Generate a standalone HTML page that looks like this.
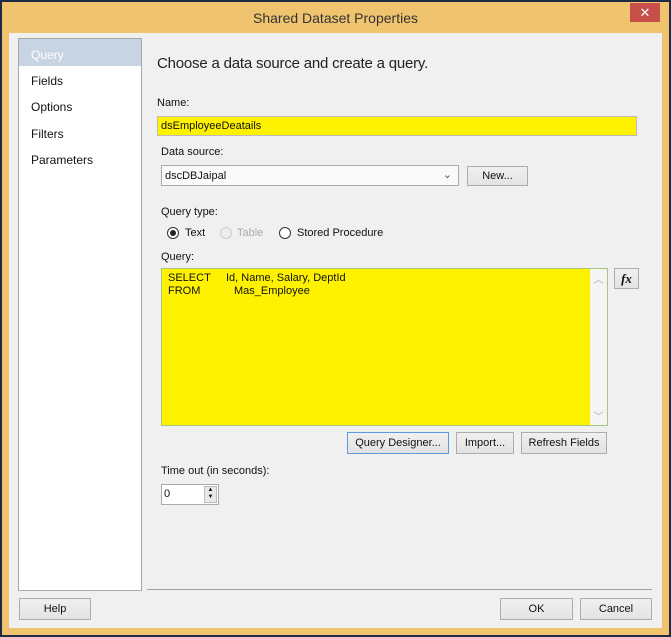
<!DOCTYPE html>
<html><head><style>
*{box-sizing:border-box;margin:0;padding:0}
body{width:671px;height:637px;background:#1f2b44;position:relative;overflow:hidden;font-family:"Liberation Sans",sans-serif;font-size:11px;color:#111}
.frame{position:absolute;left:2px;top:2px;width:667px;height:633px;background:#f0c46e}
.title{position:absolute;left:0;width:671px;text-align:center;top:10px;font-size:14px;color:#333}
.x{position:absolute;left:630px;top:3px;width:30px;height:19px;background:#c7504b;color:#fff;text-align:center;font-size:13px;line-height:19px}
.client{position:absolute;left:9px;top:33px;width:653px;height:595px;background:#f0f0f0}
.a{position:absolute}
.left{left:18px;top:38px;width:124px;height:553px;background:#fff;border:1px solid #a9a9a9}
.item{position:absolute;left:12px;font-size:12px}
.btn{position:absolute;background:linear-gradient(#f0f0f0,#e3e3e3);border:1px solid #adadad;text-align:center;font-size:11px;line-height:19px}
.yel{background:#fff200}
.radio{position:absolute;width:12px;height:12px;border:1px solid #333;border-radius:50%;background:#fff}
</style></head><body>
<div class="frame"></div>
<div class="title">Shared Dataset Properties</div>
<div class="x">✕</div>
<div class="client"></div>
<div class="a left">
<div style="position:absolute;left:0;top:0;width:122px;height:27px;background:#c8d4e2"></div>
<div class="item" style="top:9px;color:#fff">Query</div>
<div class="item" style="top:35px">Fields</div>
<div class="item" style="top:61px">Options</div>
<div class="item" style="top:88px">Filters</div>
<div class="item" style="top:114px">Parameters</div>
</div>
<div class="a" style="left:157px;top:55px;font-size:15px;color:#222;letter-spacing:-0.2px">Choose a data source and create a query.</div>
<div class="a" style="left:157px;top:97px">Name:</div>
<div class="a yel" style="left:157px;top:116px;width:480px;height:20px;border:1px solid #bbb;padding:3px 3px;font-size:11px">dsEmployeeDeatails</div>
<div class="a" style="left:161px;top:146px">Data source:</div>
<div class="a" style="left:161px;top:165px;width:298px;height:21px;background:#fafafa;border:1px solid #aaa;padding:4px 3px">dscDBJaipal<span style="position:absolute;right:6px;top:2px;color:#555">⌄</span></div>
<div class="btn" style="left:467px;top:166px;width:61px;height:20px">New...</div>
<div class="a" style="left:161px;top:206px">Query type:</div>
<div class="radio" style="left:167px;top:227px"><div style="position:absolute;left:2px;top:2px;width:6px;height:6px;border-radius:50%;background:#222"></div></div>
<div class="a" style="left:185px;top:227px">Text</div>
<div class="radio" style="left:220px;top:227px;border-color:#ccc;background:#eee"></div>
<div class="a" style="left:237px;top:227px;color:#aaa">Table</div>
<div class="radio" style="left:279px;top:227px"></div>
<div class="a" style="left:297px;top:227px">Stored Procedure</div>
<div class="a" style="left:161px;top:251px">Query:</div>
<div class="a yel" style="left:161px;top:268px;width:447px;height:158px;border:1px solid #a9c47f"></div>
<div class="a" style="left:590px;top:269px;width:17px;height:156px;background:#f4f4f4;color:#aaa;font-size:10px;text-align:center">
<div style="position:absolute;top:2px;width:17px">︿</div><div style="position:absolute;bottom:2px;width:17px">﹀</div></div>
<div class="a" style="left:168px;top:272px;line-height:13px">SELECT<br>FROM</div>
<div class="a" style="left:226px;top:272px">Id, Name, Salary, DeptId</div>
<div class="a" style="left:234px;top:285px">Mas_Employee</div>
<div class="btn" style="left:614px;top:268px;width:25px;height:21px;font-style:italic;font-weight:bold;font-family:'Liberation Serif',serif;font-size:13px">fx</div>
<div class="btn" style="left:347px;top:432px;width:102px;height:22px;border-color:#5b9be0;line-height:20px">Query Designer...</div>
<div class="btn" style="left:456px;top:432px;width:58px;height:22px;line-height:20px">Import...</div>
<div class="btn" style="left:521px;top:432px;width:86px;height:22px;line-height:20px">Refresh Fields</div>
<div class="a" style="left:161px;top:465px">Time out (in seconds):</div>
<div class="a" style="left:161px;top:484px;width:58px;height:21px;background:#fff;border:1px solid #aaa;padding:3px 2px">0</div>
<div class="a" style="left:204px;top:486px;width:13px;height:17px;background:#e8e8e8;border:1px solid #bbb;font-size:6px;line-height:7px;text-align:center">▲<br>▼</div>
<div class="a" style="left:147px;top:589px;width:505px;height:1px;background:#a0a0a0"></div>
<div class="btn" style="left:19px;top:598px;width:72px;height:22px;line-height:20px">Help</div>
<div class="btn" style="left:500px;top:598px;width:73px;height:22px;line-height:20px">OK</div>
<div class="btn" style="left:580px;top:598px;width:72px;height:22px;line-height:20px">Cancel</div>
</body></html>
